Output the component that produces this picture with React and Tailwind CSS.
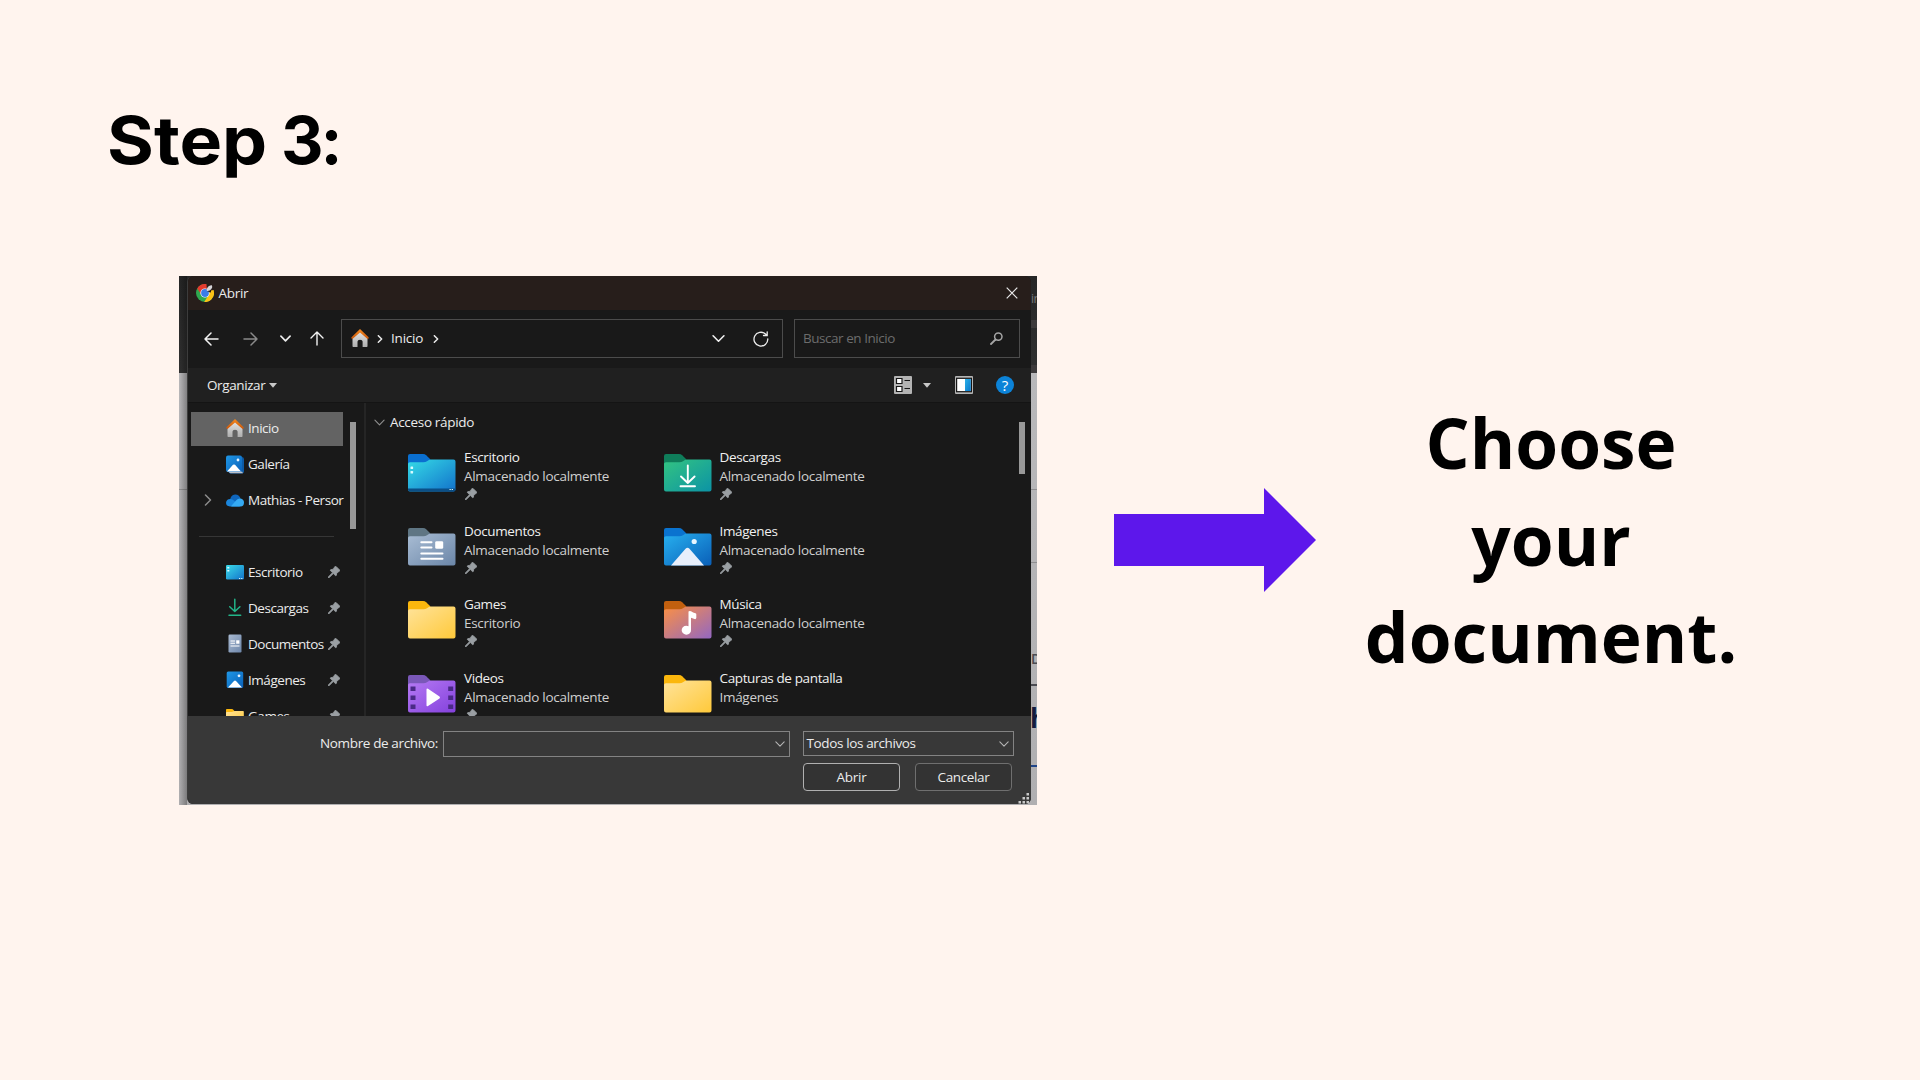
const SEGOE = "font-['Open_Sans','Noto_Sans',sans-serif]";

function Chevron({ dir = 'down', className, w = 1.6 }) {
  const d = dir === 'down' ? 'M1 3.5 L6 8.5 L11 3.5' : 'M3.5 1 L8.5 6 L3.5 11';
  return (
    <svg viewBox="0 0 12 12" className={className} fill="none" stroke="currentColor" strokeWidth={w} strokeLinecap="round" strokeLinejoin="round">
      <path d={d} />
    </svg>
  );
}

function Home({ className }) {
  return (
    <svg viewBox="0 0 18 19" className={className}>
      <defs>
        <linearGradient id="wall" x1="0" y1="0" x2="0" y2="1">
          <stop offset="0" stopColor="#e4e4e4" />
          <stop offset="1" stopColor="#aeaeae" />
        </linearGradient>
        <linearGradient id="roof" x1="0" y1="0" x2="0" y2="1">
          <stop offset="0" stopColor="#f58a1f" />
          <stop offset="1" stopColor="#c8560c" />
        </linearGradient>
      </defs>
      <path d="M1.500 8.500 L9 2 L16.500 8.500 V17.200 Q16.500 18 15.700 18 H11.600 V12.600 Q11.600 10.800 9 10.800 Q6.500 10.800 6.500 12.600 V18 H2.300 Q1.500 18 1.500 17.200 Z" fill="url(#wall)" />
      <path d="M9 0 L17.6 8.2 Q18 9 17.3 9.8 Q16.7 10.2 16 9.6 L9 3.4 L2 9.6 Q1.3 10.2 0.6 9.6 Q0 8.8 0.5 8.2 Z" fill="url(#roof)" />
    </svg>
  );
}

function Chrome({ className }) {
  return (
    <svg viewBox="0 0 18 18" className={className}>
      <circle cx="9" cy="9" r="9" fill="#2fa84f" />
      <path d="M1.2 4.5 A9 9 0 0 1 16.8 4.5 L9 5 L5.5 11 Z" fill="#e33b2e" />
      <path d="M16.8 4.5 A9 9 0 0 1 8.2 18 L12.5 11 L11 5 Z" fill="#fbc116" />
      <circle cx="9" cy="9" r="4.6" fill="#fff" />
      <circle cx="9" cy="9" r="3.9" fill="#3b7de9" />
      <path d="M10.500 0 L18 0 L18 7.500 L14 8.500 L11 7 Z" fill="#271d1a" />
      <path d="M10.800 7 Q10.300 4.500 12 2.800 Q13.800 .8 15.800 1.200 Q17 3 15.400 5 Q13.500 7.500 10.800 7 Z" fill="#d5d5d8" />
      <path d="M15 6.500 L17.700 6 L18 9 L15 9 Z" fill="#fbc116" />
    </svg>
  );
}

function Pin({ className }) {
  return (
    <svg viewBox="0 0 12 12" className={className}>
      <path d="M7 0.400 Q7.500 0 8 0.400 L11.700 4.100 Q12.100 4.600 11.600 5.100 L8.800 6.900 L8.400 9.300 Q8.100 10.100 7.500 9.600 L5.300 7.500 L1.200 11.600 L0.200 11.900 L0.500 10.800 L4.500 6.700 L2.400 4.600 Q1.900 4 2.700 3.700 L5.200 3.200 Z" fill="#9a9fa3" stroke="#9a9fa3" strokeWidth=".8" />
    </svg>
  );
}

const TABS = {
  desktop: ['#0a6fd0', '#0560b8', '#35dbe6', '#1272cb'],
  download: ['#0f7d5a', '#0f7d5a', '#33c481', '#0c93a5'],
  document: ['#5f7684', '#5f7684', '#a9bdd4', '#6b86a8'],
  image: ['#0a73cf', '#0a66bd', '#27b0ef', '#0a5fb8'],
  plain: ['#fbb70d', '#f3a90a', '#ffe39a', '#ffc93a'],
  music: ['#c2600f', '#b9560c', '#fb9044', '#9367c2'],
  video: ['#7a58b8', '#6b4aa8', '#b57af3', '#8441dd'],
};

function Folder({ kind, className }) {
  const c = TABS[kind];
  return (
    <svg viewBox="0 0 48 38" className={className}>
      <defs>
        <linearGradient id={'body-' + kind} x1="0" y1="0" x2="1" y2="1">
          <stop offset="0" stopColor={c[2]} />
          <stop offset="1" stopColor={c[3]} />
        </linearGradient>
      </defs>
      <path d="M0 2 Q0 0 2 0 H15 Q17 0 18.200 1.200 L22.500 5.500 L20 10 H0 Z" fill={c[0]} />
      <path d="M0 9.800 Q0 8.200 2 8.200 H15.500 Q17.500 8.200 19 7.200 L20.500 6.200 Q21.500 5.500 23 5.500 H45.500 Q47.500 5.500 47.500 7.500 V35.500 Q47.500 37.500 45.500 37.500 H2 Q0 37.500 0 35.500 Z" fill={'url(#body-' + kind + ')'} />
      {kind === 'desktop' && (
        <g>
          <path d="M0 34.500 H47.500 V35.500 Q47.500 37.500 45.500 37.500 H2 Q0 37.500 0 35.500 Z" fill="#0b4f86" />
          <rect x="2.500" y="12.500" width="2.600" height="2.600" rx=".6" fill="#d9fbff" />
          <rect x="2.500" y="17" width="2.600" height="2.600" rx=".6" fill="#d9fbff" />
          <path d="M41.500 35.500h1.300M43.700 35.500h1.300" stroke="#d9fbff" strokeWidth="1" />
        </g>
      )}
      {kind === 'download' && (
        <path d="M23.800 11.500 V29 M17 22.500 L23.800 29 L30.600 22.500 M16.500 32.300 H31" fill="none" stroke="#fff" strokeWidth="1.900" strokeLinecap="round" strokeLinejoin="round" />
      )}
      {kind === 'document' && (
        <g>
          <path d="M13.300 14.300 H23.500 M13.300 19.500 H23.500 M13.300 25.500 H34.500 M13.300 30.800 H34.500" stroke="#fff" strokeWidth="2" strokeLinecap="round" />
          <rect x="27.200" y="13.200" width="8" height="7.600" rx="1.400" fill="#fff" />
        </g>
      )}
      {kind === 'image' && (
        <g>
          <path d="M7 37.500 L21.500 20.800 Q23.500 18.800 25.500 20.800 L40 37.500 Z" fill="#e8effb" />
          <circle cx="30.200" cy="13.500" r="2.600" fill="#e8f6ff" />
        </g>
      )}
      {kind === 'music' && (
        <path d="M24.500 10.500 Q25.500 9.500 27 10.300 Q29 12 31.500 12.200 Q32.500 12.500 32.300 13.500 V17 Q32 18.500 30.500 18 L27 16.700 V28.500 A4.700 4.500 0 1 1 24.500 25.200 Z" fill="#fff" />
      )}
      {kind === 'video' && (
        <g>
          <path d="M2.500 11.500h5v4.600h-5zM2.500 20.500h5v4.600h-5zM2.500 29.500h5v4.600h-5zM40.200 11.500h5v4.600h-5zM40.200 20.500h5v4.600h-5zM40.200 29.500h5v4.600h-5z" fill="#4a2a86" />
          <path d="M18.500 14.500 Q18.500 13 20 13.800 L31.500 21.500 Q32.500 22.500 31.500 23.500 L20 31 Q18.500 32 18.500 30.200 Z" fill="#fff" />
        </g>
      )}
    </svg>
  );
}

function SideIcon({ kind }) {
  const cls = 'h-[19px] w-[18px] shrink-0';
  if (kind === 'home') return <Home className={cls} />;
  if (kind === 'plain') return <Folder kind="plain" className="h-[16px] w-[18px] shrink-0" />;
  return (
    <svg viewBox="0 0 18 19" className={cls}>
      <defs>
        <linearGradient id="blue" x1="0" y1="0" x2="1" y2="1">
          <stop offset="0" stopColor="#1f97e6" />
          <stop offset="1" stopColor="#0a60b8" />
        </linearGradient>
        <linearGradient id="screen" x1="0" y1="0" x2="1" y2="1">
          <stop offset="0" stopColor="#3bdbe8" />
          <stop offset="1" stopColor="#1272cb" />
        </linearGradient>
        <linearGradient id="sheet" x1="0" y1="0" x2="1" y2="1">
          <stop offset="0" stopColor="#a9bad2" />
          <stop offset="1" stopColor="#6e87aa" />
        </linearGradient>
      </defs>
      {kind === 'gallery' && (
        <g>
          <path d="M15.500 2 Q18 2 18 4 V16 Q18 18.500 15.500 18.500 H4.500 Q2.500 18.500 2.500 16.500" fill="#0d5ba6" />
          <path d="M3 16.500H16 L17 18.300H4.500Q3 18 3 16.500Z" fill="#b9bec6" />
          <rect width="16" height="16.500" rx="2" y=".5" fill="url(#blue)" />
          <path d="M1 16.500 L7 9.800 Q8 9 9 9.800 L15 16.500 Z" fill="#fff" />
          <circle cx="12" cy="5" r="1.400" fill="#e6f4ff" />
        </g>
      )}
      {kind === 'cloud' && (
        <g>
          <path d="M4 9.500 Q4.500 4 9 3.500 Q13 3.300 14.500 7.300 L10 13 L2 12 Z" fill="#0f66bd" />
          <path d="M4 15.500 Q0 15.200 0 11.800 Q.3 8 4.300 8 Q6.500 8 8.500 10 L14 15.500 Z" fill="#1b86dc" />
          <path d="M5 15.200 L10.500 9 Q12 7.200 14.500 7.500 Q18 8.300 18 11.600 Q18 15.500 14.500 15.500 H6 Z" fill="#35aaf3" />
        </g>
      )}
      {kind === 'desktop' && (
        <g>
          <rect y="2" width="18" height="14.500" rx="1.200" fill="url(#screen)" />
          <path d="M1.300 4h2v1.500h-2zM1.300 7h2v1.500h-2z" fill="#d9fbff" />
          <path d="M13 15.500h1.200M15.200 15.500h1.200" stroke="#d9fbff" />
        </g>
      )}
      {kind === 'download' && (
        <path d="M8.800 1.300 V13.300 M3.700 8.700 L8.800 13.500 L13.900 8.700 M3 17.300 H14.700" fill="none" stroke="#22b488" strokeWidth="1.500" strokeLinecap="round" strokeLinejoin="round" />
      )}
      {kind === 'document' && (
        <g>
          <rect x="2.500" y=".5" width="13" height="18" rx="1.200" fill="url(#sheet)" />
          <path d="M4.500 7h4.500M4.500 9.300h4.500M4.500 12h9" stroke="#fff" strokeWidth="1.100" />
          <rect x="10.200" y="6.300" width="3.200" height="3.400" fill="#fff" />
        </g>
      )}
      {kind === 'image' && (
        <g>
          <rect x=".7" y="1.500" width="16.500" height="16.500" rx="1.500" fill="url(#blue)" />
          <path d="M2 17.500 L8 11 Q9 10.200 10 11 L16 17.500 Z" fill="#fff" />
          <circle cx="13" cy="5.800" r="1.400" fill="#e6f4ff" />
        </g>
      )}
    </svg>
  );
}

function SideRow({ kind, label, pinned, selected, expand }) {
  return (
    <div className="flex h-[35.900px] w-[152px] shrink-0 items-center">
      <div className={'flex h-[34px] w-full items-center ' + (selected ? 'bg-[#636363]' : '')}>
        <div className="flex w-[35px] shrink-0 justify-start pl-[11px]">
          {expand && <Chevron dir="right" className="size-[12px] text-[#8c8c8c]" w={1.5} />}
        </div>
        <SideIcon kind={kind} />
        <span className="ml-[4px] w-[76px] shrink-0 whitespace-nowrap tracking-[-0.460px]">{label}</span>
        {pinned && <Pin className="ml-[4px] size-[12px] shrink-0" />}
      </div>
    </div>
  );
}

function Item({ kind, title, sub, pinned = true }) {
  return (
    <div className="flex h-[73.500px] w-[255.500px]">
      <Folder kind={kind} className="mt-[6px] h-[38px] w-[48px] shrink-0" />
      <div className="ml-[8px] whitespace-nowrap leading-[19px]">
        <div className="text-[#f0f0f0]">{title}</div>
        <div className="tracking-[-0.300px] text-[#cfcfcf]">{sub}</div>
        {pinned && <Pin className="mt-[2px] ml-[0.500px] size-[12px]" />}
      </div>
    </div>
  );
}

const ITEMS = [
  ['desktop', 'Escritorio', 'Almacenado localmente'],
  ['download', 'Descargas', 'Almacenado localmente'],
  ['document', 'Documentos', 'Almacenado localmente'],
  ['image', 'Imágenes', 'Almacenado localmente'],
  ['plain', 'Games', 'Escritorio'],
  ['music', 'Música', 'Almacenado localmente'],
  ['video', 'Videos', 'Almacenado localmente'],
  ['plain', 'Capturas de pantalla', 'Imágenes', false],
];

function TitleBar() {
  return (
    <div className="flex h-[34px] items-center bg-[#271e1b] pl-[7.500px]">
      <Chrome className="size-[18px]" />
      <span className="ml-[5px] tracking-[-0.3px]">Abrir</span>
      <svg viewBox="0 0 12 12" className="mr-[13px] ml-auto size-[12px]" stroke="#e8e8e8" strokeWidth="1.200">
        <path d="M.7 .7 L11.300 11.300 M11.300 .7 L.7 11.300" />
      </svg>
    </div>
  );
}

function NavBar() {
  return (
    <div className="flex h-[58px] items-center bg-[#191919] pb-px">
      <svg viewBox="0 0 15 14" className="ml-[16px] h-[14px] w-[15px]" fill="none" stroke="#f2f2f2" strokeWidth="1.500" strokeLinecap="round" strokeLinejoin="round">
        <path d="M14 7 H1 M7 1 L1 7 L7 13" />
      </svg>
      <svg viewBox="0 0 15 14" className="ml-[24px] h-[14px] w-[15px]" fill="none" stroke="#8a8a8a" strokeWidth="1.500" strokeLinecap="round" strokeLinejoin="round">
        <path d="M1 7 H14 M8 1 L14 7 L8 13" />
      </svg>
      <Chevron className="ml-[22px] size-[11px]" w={1.8} />
      <svg viewBox="0 0 14 15" className="ml-[19px] h-[15px] w-[14px]" fill="none" stroke="#f2f2f2" strokeWidth="1.400" strokeLinecap="round" strokeLinejoin="round">
        <path d="M7 14 V1 M1 7 L7 1 L13 7" />
      </svg>
      <div className="ml-[17px] flex h-[39px] w-[442px] items-center border border-[#4c4c4c]">
        <Home className="ml-[9px] h-[19px] w-[18px]" />
        <Chevron dir="right" className="ml-[7px] size-[8px]" w={2.2} />
        <span className="ml-[7px] w-[34px] tracking-[-0.2px]">Inicio</span>
        <Chevron dir="right" className="ml-[7px] size-[8px]" w={2.200} />
        <Chevron className="mr-[28px] ml-auto size-[13px]" w={1.500} />
        <svg viewBox="0 0 16 16" className="mr-[13px] size-[16px]" fill="none" stroke="#ececec" strokeWidth="1.300" strokeLinecap="round">
          <path d="M14.800 7.800 A6.900 6.900 0 1 1 12.500 3 L14 4.300 M14.200 .8 V4.500 H10.500" />
        </svg>
      </div>
      <div className="ml-[11px] flex h-[39px] w-[226px] items-center border border-[#4c4c4c]">
        <span className="ml-[8px] tracking-[-0.460px] text-[#6c6c6c]">Buscar en Inicio</span>
        <svg viewBox="0 0 13 13" className="mr-[16px] ml-auto size-[13px]" fill="none" stroke="#a5a5a5" strokeWidth="1.500" strokeLinecap="round">
          <circle cx="8.300" cy="4.600" r="3.700" />
          <path d="M5.500 7.500 L1 12" strokeWidth="1.800" />
        </svg>
      </div>
    </div>
  );
}

function ToolBar() {
  return (
    <div className="flex h-[34px] items-center bg-[#202020] pl-[19px]">
      <span className="tracking-[-0.400px]">Organizar</span>
      <svg viewBox="0 0 8 5" className="ml-[4px] h-[5px] w-[8px]"><path d="M0 0H8L4 4.700Z" fill="#c8c8c8" /></svg>
      <svg viewBox="0 0 18 18" className="ml-auto size-[18px]">
        <rect width="18" height="18" rx="1" fill="#b4b4b4" />
        <path d="M2.500 2.500h5.500v5h-5.500zM2.500 10.500h5.500v5h-5.500z" fill="#fff" stroke="#161616" strokeWidth="1.200" />
        <path d="M10.500 4.500h5.500M10.500 12.500h5.500" stroke="#161616" strokeWidth="1.100" />
      </svg>
      <svg viewBox="0 0 8 5" className="ml-[11px] h-[5px] w-[8px]"><path d="M0 0H8L4 4.700Z" fill="#c8c8c8" /></svg>
      <svg viewBox="0 0 18 18" className="ml-[24px] size-[18px]">
        <defs>
          <linearGradient id="pane" x1="0" y1="0" x2="1" y2="1">
            <stop offset="0" stopColor="#2bb0e8" />
            <stop offset="1" stopColor="#0878cc" />
          </linearGradient>
        </defs>
        <rect width="18" height="18" rx="1" fill="#b4b4b4" />
        <rect x="1.600" y="2.300" width="14.800" height="13.400" fill="#fff" stroke="#161616" strokeWidth="1.200" />
        <rect x="10" y="3" width="5.800" height="12" fill="url(#pane)" />
      </svg>
      <div className="mr-[17px] ml-[23px] flex size-[18px] items-center justify-center rounded-full bg-[#0c83d8] text-[15px] leading-none tracking-normal text-white">?</div>
    </div>
  );
}

function Dialog() {
  return (
    <div className={'flex h-[528px] w-[844px] shrink-0 flex-col overflow-hidden rounded-[6px] border-l border-[#3c3c3c] bg-[#191919] text-[13.500px] tracking-[-0.370px] text-[#ececec] ' + SEGOE}>
      <TitleBar />
      <NavBar />
      <ToolBar />
      <div className="flex h-[314px] overflow-hidden border-t border-[#141414]">
        <div className="flex w-[178px] shrink-0 border-r-2 border-[#252525] pl-[3px]">
          <div className="flex flex-col pt-[7.600px]">
            <SideRow kind="home" label="Inicio" selected />
            <SideRow kind="gallery" label="Galería" />
            <SideRow kind="cloud" label="Mathias - Persor" expand />
            <div className="flex h-[35.900px] shrink-0 items-center pl-[8px]">
              <div className="h-px w-[135px] bg-[#363636]" />
            </div>
            <SideRow kind="desktop" label="Escritorio" pinned />
            <SideRow kind="download" label="Descargas" pinned />
            <SideRow kind="document" label="Documentos" pinned />
            <SideRow kind="image" label="Imágenes" pinned />
            <SideRow kind="plain" label="Games" pinned />
          </div>
          <div className="mt-[19px] ml-[7px] h-[107px] w-[6px] bg-[#989898]" />
        </div>
        <div className="w-[653px] pl-[8px]">
          <div className="flex h-[39px] items-center">
            <Chevron className="size-[11px] text-[#8f8f8f]" w={1.200} />
            <span className="ml-[5px] tracking-[-0.320px]">Acceso rápido</span>
          </div>
          <div className="grid grid-cols-[255.500px_255.500px] pt-[6px] pl-[34px]">
            {ITEMS.map(([kind, title, sub, pinned]) => (
              <Item key={title} kind={kind} title={title} sub={sub} pinned={pinned} />
            ))}
          </div>
        </div>
        <div className="mt-[19px] h-[52px] w-[6px] bg-[#989898]" />
      </div>
      <div className="h-[88px] bg-[#383838]">
        <div className="flex h-[40.500px] items-end">
          <div className="flex h-[26px] w-[250px] items-center justify-end whitespace-nowrap">Nombre de archivo:</div>
          <div className="ml-[4.500px] flex h-[26px] w-[347px] items-center justify-end border border-[#838383] pr-[4px]">
            <Chevron className="size-[10px] text-[#b5b5b5]" w={1.300} />
          </div>
          <div className="mb-[0.500px] ml-[13px] flex h-[25px] w-[211px] items-center justify-between border border-[#838383] pr-[4px] pl-[3px]">
            <span>Todos los archivos</span>
            <Chevron className="size-[10px] text-[#b5b5b5]" w={1.300} />
          </div>
        </div>
        <div className="flex pt-[6.500px] pl-[615px]">
          <div className="flex h-[28px] w-[97px] items-center justify-center rounded-[4px] border border-[#b0b0b0] bg-[#333333] tracking-[-0.200px]">Abrir</div>
          <div className="ml-[15px] flex h-[28px] w-[97px] items-center justify-center rounded-[4px] border border-[#6f6f6f] bg-[#333333]">Cancelar</div>
          <svg viewBox="0 0 12 12" className="mt-[30px] ml-[6px] size-[12px]" fill="#c9c9c9">
            <path d="M8.500 0h2.500v2.500h-2.500zM4.500 4h2.500v2.500h-2.500zM8.500 4h2.500v2.500h-2.500zM.5 8h2.500v2.500h-2.500zM4.500 8h2.500v2.500h-2.500zM8.500 8h2.500v2.500h-2.500z" />
          </svg>
        </div>
      </div>
    </div>
  );
}

/* Sliver of the browser page that stays visible to the right of the dialog. */
function PageEdge() {
  return (
    <div className="flex w-[6px] shrink-0 flex-col overflow-hidden font-['Open_Sans',sans-serif]">
      <div className="mt-[14px] h-[18px] text-[12px] leading-[18px] tracking-[-0.500px] text-[#77787a]">in</div>
      <div className="mt-[12px] h-[8px] bg-[#3d3a3b]" />
      <div className="mt-[37px] h-[8px] bg-[#3d3a3b]" />
      <div className="mt-[116px] h-px bg-[#8f8e90]" />
      <div className="mt-[72px] h-px bg-[#8f8e90]" />
      <div className="mt-[86px] h-[20px] text-[14px] leading-[20px] font-semibold text-[#4a4a50]">D</div>
      <div className="mt-[15px] h-[2px] bg-[#4a4a50]" />
      <div className="mt-[17px] h-[30px] text-[26px] leading-[30px] font-bold text-[#141c3c]"><span className="-ml-px">h</span></div>
      <div className="mt-[32px] h-[2px] bg-[#1f4488]" />
    </div>
  );
}

export default function App() {
  return (
    <div className="h-[1080px] w-[1920px] overflow-hidden bg-[#fff4ee] text-black">
      <h1 className="flex h-[276px] pt-[100px] pl-[107px] font-['Inter',sans-serif] text-[66px] leading-[80px] font-bold">
        <span className="w-[174px] origin-left scale-x-[1.085]">Step</span>
        <span className="tracking-[-3px]">3:</span>
      </h1>
      <div className="flex pl-[178.500px]">
        <div className="flex h-[528.500px] w-[858.500px] overflow-hidden bg-[linear-gradient(#262626_0,#303030_97px,#b9b8ba_97px,#b0afb1_100%)]">
          <div className="flex w-[8.500px] shrink-0 flex-col justify-start bg-gradient-to-r from-transparent to-black/30">
            <div className="mt-[213px] h-px bg-black/20" />
          </div>
          <Dialog />
          <PageEdge />
        </div>
        <svg viewBox="0 0 202 104" className="mt-[212px] ml-[76.500px] h-[104px] w-[202px]" fill="#5d17eb">
          <path d="M0 26 H150 V0 L202 52 L150 104 V78 H0 Z" />
        </svg>
        <div className="mt-[118px] ml-[35.500px] w-[400px] text-center font-['Open_Sans',sans-serif] text-[69.300px] leading-[97px] font-bold">
          <div>Choose</div>
          <div>your</div>
          <div>document.</div>
        </div>
      </div>
    </div>
  );
}
